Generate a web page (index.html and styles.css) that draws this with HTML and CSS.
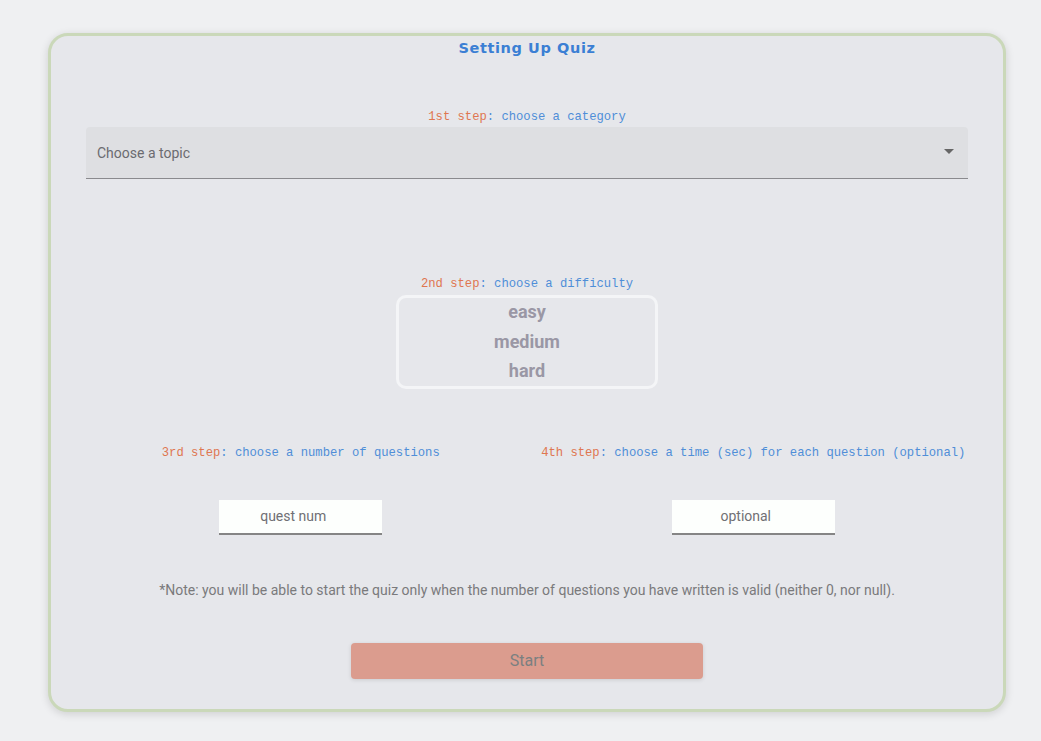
FILE: index.html
```html
<!DOCTYPE html>
<html lang="en">
<head>
<meta charset="utf-8">
<title>Setting Up Quiz</title>
<link rel="stylesheet" href="styles.css">
</head>
<body>
<main class="card">
  <h1 class="title">Setting Up Quiz</h1>

  <p class="step step-1"><span class="num">1st step</span>: choose a category</p>
  <div class="select">
    <span class="select-label">Choose a topic</span>
    <svg class="arrow" width="10" height="5" viewBox="0 0 10 5"><path d="M0 0 L10 0 L5 5 Z" fill="#666"/></svg>
  </div>

  <p class="step step-2"><span class="num">2nd step</span>: choose a difficulty</p>
  <div class="difficulty">
    <div class="level">easy</div>
    <div class="level">medium</div>
    <div class="level">hard</div>
  </div>

  <div class="row">
    <div class="col">
      <p class="step"><span class="num">3rd step</span>: choose a number of questions</p>
      <input class="field" type="text" placeholder="quest num">
    </div>
    <div class="col">
      <p class="step"><span class="num">4th step</span>: choose a time (sec) for each question (optional)</p>
      <input class="field" type="text" placeholder="optional">
    </div>
  </div>

  <p class="note">*Note: you will be able to start the quiz only when the number of questions you have written is valid (neither 0, nor null).</p>

  <button class="start" type="button">Start</button>
</main>
</body>
</html>
```

FILE: styles.css
```css
* { box-sizing: border-box; }

html, body {
  margin: 0;
  padding: 0;
  background: #eff0f2;
}

body {
  font-family: Roboto, "Liberation Sans", sans-serif;
  height: 741px;
  overflow: hidden;
}

.card {
  margin: 33px 0 0 48px;
  width: 958px;
  height: 679px;
  border: 3px solid #cad8b9;
  border-radius: 20px;
  background: #e6e7eb;
  box-shadow: 0 2px 8px rgba(0, 0, 0, 0.14);
  display: flex;
  flex-direction: column;
  align-items: center;
}

.title {
  margin: 2px 0 0;
  font-family: "DejaVu Sans", sans-serif;
  font-weight: 800;
  font-size: 14.5px;
  line-height: 20px;
  letter-spacing: 0.6px;
  color: #3b7fd4;
}

.step {
  margin: 0;
  font-family: "Liberation Mono", "Courier New", monospace;
  font-size: 12.2px;
  line-height: 14px;
  color: #4f8ed8;
  white-space: nowrap;
  text-align: center;
}

.step .num { color: #df7650; }

.step-1 { margin-top: 52px; }

.select {
  margin-top: 3px;
  width: 882px;
  height: 52px;
  background: #dedfe2;
  border-bottom: 1px solid #8a8a8e;
  border-radius: 4px 4px 0 0;
  display: flex;
  align-items: center;
  justify-content: space-between;
  padding: 0 14px 0 11px;
}

.select-label {
  font-size: 14px;
  color: #6b6b70;
}

.arrow { display: block; margin-top: -2px; }

.step-2 { margin-top: 98px; }

.difficulty {
  margin-top: 4px;
  width: 262px;
  height: 94px;
  border: 3px solid #f4f5f7;
  border-radius: 10px;
  display: flex;
  flex-direction: column;
  align-items: center;
}

.level {
  font-size: 18px;
  font-weight: 700;
  line-height: 29.5px;
  color: #9a97a5;
}

.level:first-child { margin-top: -1px; }

.row {
  margin-top: 57px;
  width: 905px;
  display: grid;
  grid-template-columns: 1fr 1fr;
}

.col {
  display: flex;
  flex-direction: column;
  align-items: center;
}

.field {
  margin-top: 40px;
  width: 163px;
  height: 35px;
  border: none;
  border-bottom: 2px solid #858585;
  border-radius: 0;
  background: #fdfffd;
  font-family: Roboto, "Liberation Sans", sans-serif;
  font-size: 14px;
  color: #6b6b6b;
  text-align: center;
  padding: 0 15px 1px 0;
  outline: none;
}

.field::placeholder { color: #707074; opacity: 1; }

.note {
  margin: 45px 0 0;
  font-size: 14px;
  line-height: 20px;
  color: #7a7a7c;
}

.start {
  margin-top: 43px;
  width: 352px;
  height: 36px;
  border: none;
  border-radius: 4px;
  background: #db9c8e;
  font-family: Roboto, "Liberation Sans", sans-serif;
  font-size: 16px;
  line-height: 35px;
  padding: 0 0 1px;
  color: #7a8081;
  box-shadow: 0 1px 4px rgba(0, 0, 0, 0.12);
  cursor: pointer;
}
```
